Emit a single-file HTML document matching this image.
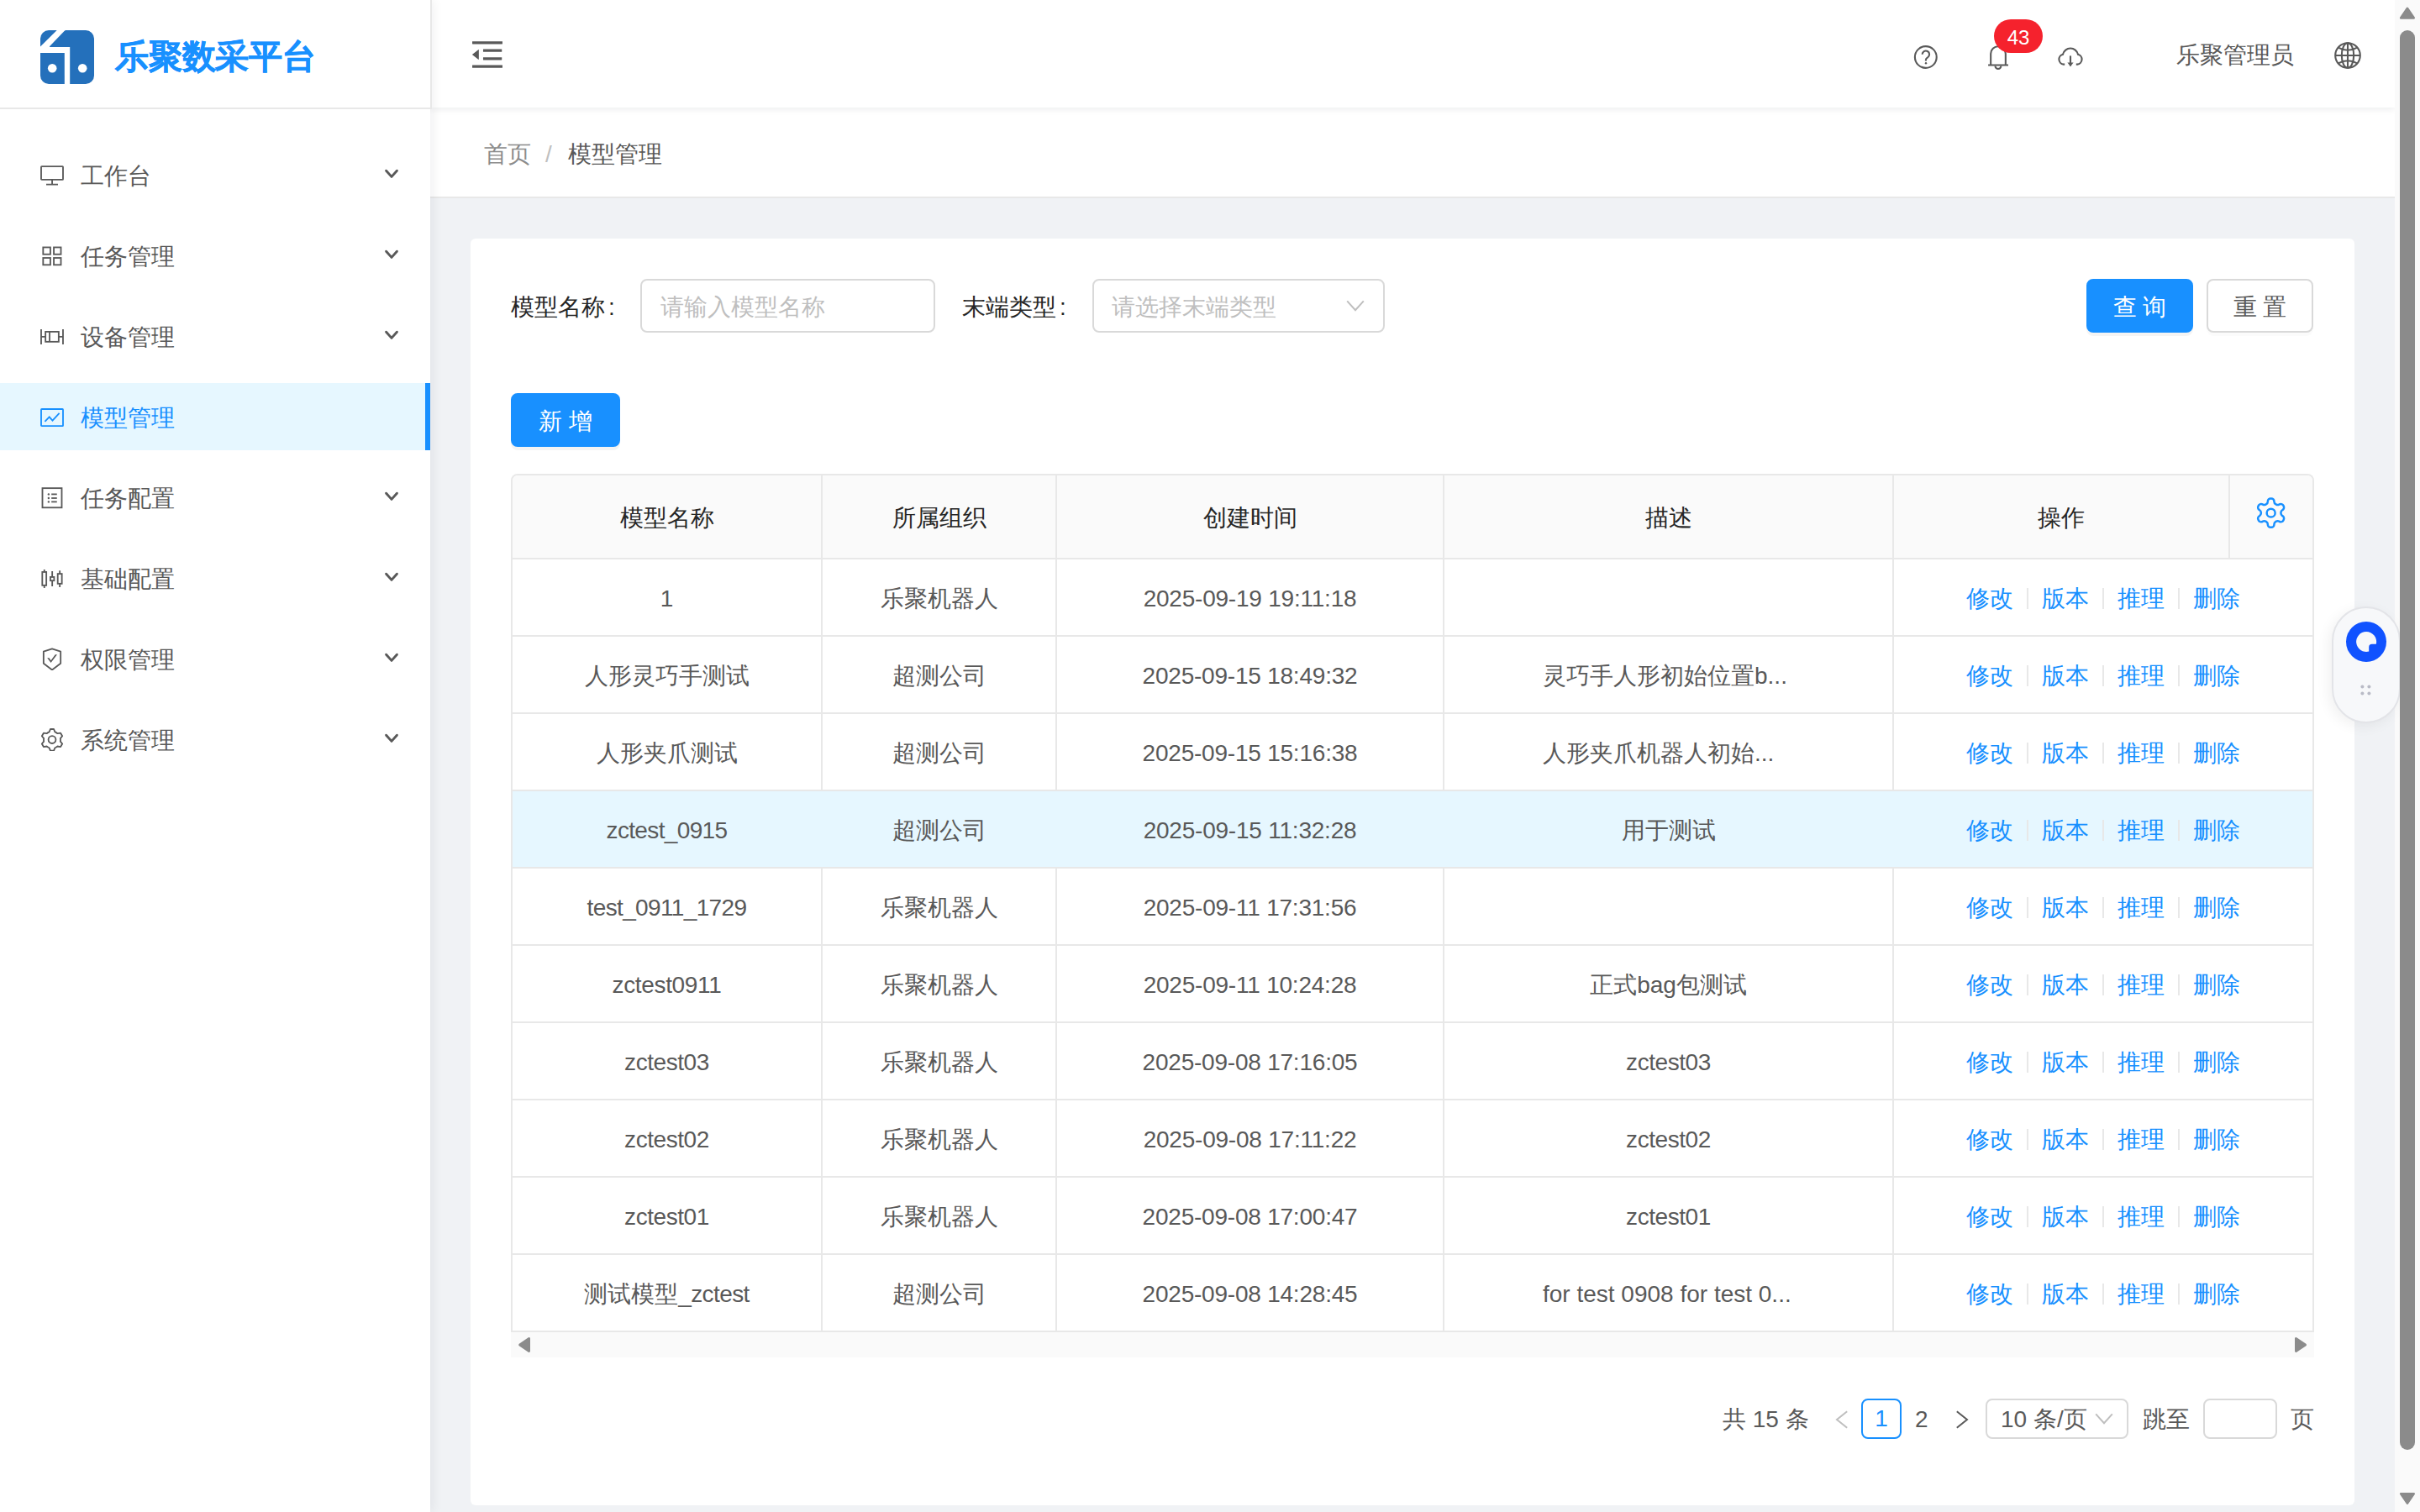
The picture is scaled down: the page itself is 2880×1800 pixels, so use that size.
<!DOCTYPE html>
<html><head><meta charset="utf-8"><title>模型管理</title>
<style>
html{zoom:2;overflow:hidden}
@media (max-width:1600px){html{zoom:1}}
*{box-sizing:border-box;margin:0;padding:0}
body{width:1440px;height:900px;overflow:hidden;position:relative;background:#f0f2f5;font-family:"Liberation Sans",sans-serif;font-size:14px;color:#595959;line-height:1.5715}
.abs{position:absolute}
/* sidebar */
#side{position:absolute;left:0;top:0;width:256px;height:900px;background:#fff;box-shadow:2px 0 6px rgba(0,21,41,.06);z-index:3}
#logo{position:absolute;left:0;top:0;width:257px;height:65px;border-bottom:1px solid #e8e8e8;border-right:1px solid #e8e8e8;background:#fff}
#logo svg{position:absolute;left:24px;top:18px}
#logo .t{position:absolute;left:68.5px;top:18.5px;font-size:20px;font-weight:bold;-webkit-text-stroke:0.25px #1890ff;color:#1890ff;line-height:30px;letter-spacing:-0.1px}
.mi{position:absolute;left:0;width:256px;height:40px;line-height:40px;color:#595959}
.mi .ic{position:absolute;left:24px;top:13px;width:14px;height:14px}
.mi .ic svg{display:block}
.mi .mt{position:absolute;left:48px;top:1px}
.mi.act{background:#e6f7ff;color:#1890ff}
.mi.act:after{content:"";position:absolute;right:0;top:0;width:3px;height:40px;background:#1890ff}
.arr{position:absolute;left:228px;top:15px;width:10px;height:8px}
/* header */
#hdr{position:absolute;left:256px;top:0;width:1169px;height:64px;background:#fff;box-shadow:0 1px 4px rgba(0,21,41,.08);z-index:2}
#bc{position:absolute;left:256px;top:64px;width:1169px;height:54px;background:#fff;border-bottom:1px solid #e8e8e8;z-index:1}
/* card */
#card{position:absolute;left:280px;top:142px;width:1121px;height:754px;background:#fff;border-radius:3px}
.lbl{position:absolute;color:#262626;line-height:24px}
.inp{position:absolute;height:32px;border:1px solid #d9d9d9;border-radius:4px;background:#fff}
.ph{position:absolute;color:#bfbfbf;line-height:24px}
.btn{position:absolute;height:32px;border-radius:4px;text-align:center;line-height:32px;font-size:14px}
.btn.p{background:#1890ff;color:#fff;border:1px solid #1890ff;box-shadow:0 2px 0 rgba(0,0,0,.045)}
.btn.d{background:#fff;color:#595959;border:1px solid #d9d9d9;box-shadow:0 2px 0 rgba(0,0,0,.016)}
/* table */
#tbl{position:absolute;left:304px;top:282px;width:1073px;height:511px;border:1px solid #e8e8e8;border-bottom:0;border-radius:4px 4px 0 0;overflow:hidden;background:#fff}
.th{position:absolute;top:0;height:50px;background:#fafafa;border-bottom:1px solid #e8e8e8}
.thc{position:absolute;top:0;height:50px;line-height:51px;text-align:center;color:#262626;font-weight:500}
.vl{position:absolute;width:1px;background:#e8e8e8}
.tr{position:absolute;left:0;width:1071px;height:46px;border-bottom:1px solid #e8e8e8}
.tr.hl{background:#e6f7ff}
.td{position:absolute;top:0;height:45px;line-height:47px;text-align:center;white-space:nowrap;color:#595959}
.c1{left:0;width:183.5px}.c2{left:184.5px;width:138.5px}.c3{left:324px;width:229.5px}.c4{left:554.5px;width:266.5px}.c5{left:822px;width:249px}
.c5 a{color:#1890ff}
.dv{display:inline-block;width:1px;height:12.6px;background:#e8e8e8;margin:0 8px;vertical-align:-1.5px}
#hs{position:absolute;left:304px;top:793px;width:1073px;height:15px;background:#fafafa}
/* pagination */
.pg{position:absolute;line-height:24px;color:#595959}
/* scrollbar */
#vs{position:absolute;left:1425px;top:0;width:15px;height:900px;background:#fafafa;z-index:4}
#th2{position:absolute;left:1428px;top:18px;width:9px;height:845px;border-radius:4.5px;background:#8b8b8b;z-index:6}
</style></head>
<body>
<div id="side">
  <div id="logo">
    <svg width="32" height="32" viewBox="0 0 64 64"><g fill="#2470bb"><path d="M0 19.6L19.7 0H10A10 10 0 0 0 0 10z"/><path d="M30.5 0H54A10 10 0 0 1 64 10V54A10 10 0 0 1 54 64H35.2V20H11.6Q10.4 19.8 11.2 18.9L28.5 1Q29.5 0 30.5 0z"/><path d="M0 27H28.8V64H10A10 10 0 0 1 0 54z"/></g><g fill="#fff"><circle cx="14.2" cy="45.2" r="5.3"/><circle cx="50.2" cy="45.2" r="5.3"/></g></svg>
    <div class="t">乐聚数采平台</div>
  </div>
<div class="mi" style="top:84px"><span class="ic"><svg width="14" height="14" viewBox="0 0 14 14"><rect x="0.5" y="2.07" width="13" height="7.86" rx="0.35" fill="none" stroke="#595959" stroke-width="0.92"/><path d="M7.03 9.9v2.88M3.5 12.78h7" stroke="#595959" stroke-width="0.92" fill="none"/></svg></span><span class="mt">工作台</span><svg class="arr" width="10" height="8" viewBox="0 0 10 8"><path d="M1.8 2.6L5 6.2 8.2 2.6" fill="none" stroke="#595959" stroke-width="1.45" stroke-linecap="round" stroke-linejoin="round"/></svg></div>
<div class="mi" style="top:132px"><span class="ic"><svg width="14" height="14" viewBox="0 0 14 14"><g fill="none" stroke="#595959" stroke-width="0.92"><rect x="1.66" y="2.23" width="4.3" height="4.14"/><rect x="8.03" y="2.23" width="4.22" height="4.14"/><rect x="1.66" y="8.51" width="4.3" height="4.14"/><rect x="8.03" y="8.51" width="4.22" height="4.14"/></g></svg></span><span class="mt">任务管理</span><svg class="arr" width="10" height="8" viewBox="0 0 10 8"><path d="M1.8 2.6L5 6.2 8.2 2.6" fill="none" stroke="#595959" stroke-width="1.45" stroke-linecap="round" stroke-linejoin="round"/></svg></div>
<div class="mi" style="top:180px"><span class="ic"><svg width="14" height="14" viewBox="0 0 14 14"><g fill="none" stroke="#595959" stroke-width="0.92"><path d="M0.5 3.02v8.93M13.49 3.02v8.93M0.5 7.4h2.57M10.92 7.4h2.57"/><rect x="3.07" y="4.46" width="7.85" height="5.96"/><path d="M5.5 4.46v5.96"/></g></svg></span><span class="mt">设备管理</span><svg class="arr" width="10" height="8" viewBox="0 0 10 8"><path d="M1.8 2.6L5 6.2 8.2 2.6" fill="none" stroke="#595959" stroke-width="1.45" stroke-linecap="round" stroke-linejoin="round"/></svg></div>
<div class="mi act" style="top:228px"><span class="ic"><svg width="14" height="14" viewBox="0 0 14 14"><g fill="none" stroke="#1890ff" stroke-width="0.92"><rect x="0.5" y="2.48" width="13" height="10.09" rx="0.35"/><path d="M2.7 9.9L5.35 7.2 7.25 9.3 11.3 4.9"/></g></svg></span><span class="mt">模型管理</span></div>
<div class="mi" style="top:276px"><span class="ic"><svg width="14" height="14" viewBox="0 0 14 14"><g fill="none" stroke="#595959" stroke-width="0.92"><rect x="1.25" y="1.57" width="11.49" height="11.57"/></g><g fill="#595959"><circle cx="4.93" cy="5.2" r="0.6"/><circle cx="4.93" cy="7.5" r="0.6"/><circle cx="4.93" cy="9.7" r="0.6"/><rect x="6.58" y="4.75" width="3.3" height="0.9"/><rect x="6.58" y="7.05" width="3.3" height="0.9"/><rect x="6.58" y="9.25" width="3.3" height="0.9"/></g></svg></span><span class="mt">任务配置</span><svg class="arr" width="10" height="8" viewBox="0 0 10 8"><path d="M1.8 2.6L5 6.2 8.2 2.6" fill="none" stroke="#595959" stroke-width="1.45" stroke-linecap="round" stroke-linejoin="round"/></svg></div>
<div class="mi" style="top:324px"><span class="ic"><svg width="14" height="14" viewBox="0 0 14 14"><g fill="none" stroke="#595959" stroke-width="0.92"><rect x="1.16" y="3.48" width="2.41" height="7.94"/><path d="M2.37 1.95v1.53M2.37 11.42v1.53"/><rect x="5.96" y="6.46" width="2.24" height="2.14"/><path d="M7.08 3.03v3.43M7.08 8.6v3.35"/><rect x="10.35" y="4.56" width="2.47" height="5.86"/><path d="M11.58 2.61v1.95M11.58 10.42v2.03"/></g></svg></span><span class="mt">基础配置</span><svg class="arr" width="10" height="8" viewBox="0 0 10 8"><path d="M1.8 2.6L5 6.2 8.2 2.6" fill="none" stroke="#595959" stroke-width="1.45" stroke-linecap="round" stroke-linejoin="round"/></svg></div>
<div class="mi" style="top:372px"><span class="ic"><svg width="14" height="14" viewBox="0 0 14 14"><g fill="none" stroke="#595959" stroke-width="0.92" stroke-linejoin="round"><path d="M7 1.15L12.08 2.85V9.9L7 13.75 1.92 9.9V2.85z"/></g><path d="M4.1 6.57h1.15l1.05 1.6 2.55-3.58h1.15L6.28 9.45z" fill="#595959"/></svg></span><span class="mt">权限管理</span><svg class="arr" width="10" height="8" viewBox="0 0 10 8"><path d="M1.8 2.6L5 6.2 8.2 2.6" fill="none" stroke="#595959" stroke-width="1.45" stroke-linecap="round" stroke-linejoin="round"/></svg></div>
<div class="mi" style="top:420px"><span class="ic"><svg width="14" height="14" viewBox="0 0 14 14"><g fill="none" stroke="#595959" stroke-width="0.92" stroke-linejoin="round"><path d="M5.29 2.73L5.98 1.01L8.02 1.01L8.71 2.73A5.00 5.00 0 0 1 10.21 3.60L12.05 3.34L13.07 5.10L11.92 6.56A5.00 5.00 0 0 1 11.92 8.30L13.07 9.76L12.05 11.52L10.21 11.26A5.00 5.00 0 0 1 8.71 12.13L8.02 13.85L5.98 13.85L5.29 12.13A5.00 5.00 0 0 1 3.79 11.26L1.95 11.52L0.93 9.76L2.08 8.30A5.00 5.00 0 0 1 2.08 6.56L0.93 5.10L1.95 3.34L3.79 3.60A5.00 5.00 0 0 1 5.29 2.73Z"/><circle cx="7" cy="7.3" r="2.2"/></g></svg></span><span class="mt">系统管理</span><svg class="arr" width="10" height="8" viewBox="0 0 10 8"><path d="M1.8 2.6L5 6.2 8.2 2.6" fill="none" stroke="#595959" stroke-width="1.45" stroke-linecap="round" stroke-linejoin="round"/></svg></div>
</div>
<div id="hdr">
  <svg class="abs" style="left:22.5px;top:21px" width="23" height="23" viewBox="0 0 1024 1024" fill="#595959"><path d="M408 442h480c4.4 0 8-3.6 8-8v-56c0-4.4-3.6-8-8-8H408c-4.4 0-8 3.6-8 8v56c0 4.4 3.6 8 8 8zm-8 204c0 4.4 3.6 8 8 8h480c4.4 0 8-3.6 8-8v-56c0-4.4-3.6-8-8-8H408c-4.4 0-8 3.6-8 8v56zm504-486H120c-4.4 0-8 3.6-8 8v56c0 4.4 3.6 8 8 8h784c4.4 0 8-3.6 8-8v-56c0-4.4-3.6-8-8-8zm0 632H120c-4.4 0-8 3.6-8 8v56c0 4.4 3.6 8 8 8h784c4.4 0 8-3.6 8-8v-56c0-4.4-3.6-8-8-8zM115.4 518.9L271.7 642c5.8 4.6 14.4.5 14.4-6.9V388.9c0-7.4-8.5-11.5-14.4-6.9L115.4 505.1a8.74 8.74 0 000 13.8z"/></svg>
  <!-- question -->
  <svg class="abs" style="left:882.5px;top:26.5px" width="15" height="15" viewBox="0 0 15 15"><circle cx="7.4" cy="7.5" r="6.45" fill="none" stroke="#595959" stroke-width="1.05"/><path d="M5.35 5.9a2.1 2.1 0 1 1 3.2 1.75c-.7.4-1.1.8-1.1 1.6v.5" fill="none" stroke="#595959" stroke-width="1.05"/><circle cx="7.5" cy="11.1" r="0.6" fill="#595959"/></svg>
  <!-- bell -->
  <svg class="abs" style="left:925px;top:26px" width="16" height="16" viewBox="0 0 16 16"><path d="M3.58 12.75V6.05a4.42 4.42 0 0 1 8.84 0V12.75M2.05 12.75h11.95" fill="none" stroke="#595959" stroke-width="1.05"/><path d="M6.25 13.3a1.72 1.72 0 0 0 3.44 0" fill="none" stroke="#595959" stroke-width="1.05"/></svg>
  <div class="abs" style="left:930.5px;top:11.5px;width:29px;height:20px;border-radius:10px;background:#f5222d;color:#fff;font-size:12px;line-height:22px;text-align:center">43</div>
  <!-- cloud -->
  <svg class="abs" style="left:968px;top:27px" width="16" height="14" viewBox="0 0 16 14"><path d="M4.6 11.3H3.9A3 3 0 0 1 3.5 5.4a4.6 4.6 0 0 1 9 0A3 3 0 0 1 12.1 11.3h-.7" fill="none" stroke="#595959" stroke-width="1.05"/><path d="M8 6.2v6" stroke="#595959" stroke-width="1.05"/><path d="M6.2 10.3L8 12.6 9.8 10.3z" fill="#595959"/></svg>
  <div class="abs" style="left:1039px;top:22px;line-height:22px;color:#595959">乐聚管理员</div>
  <!-- globe -->
  <svg class="abs" style="left:1133px;top:25px" width="16" height="16" viewBox="0 0 16 16"><g fill="none" stroke="#595959" stroke-width="1.05"><circle cx="8" cy="8" r="7.4"/><ellipse cx="8" cy="8" rx="3.6" ry="7.4"/><path d="M8 .6v14.8M.6 8h14.8M2.4 3.3Q8 6.5 13.6 3.3M2.4 12.7Q8 9.5 13.6 12.7"/></g></svg>
</div>
<div id="bc">
  <div class="abs" style="left:32px;top:17px;line-height:22px;font-size:14px"><span style="color:#8c8c8c">首页</span><span style="color:#bfbfbf;margin:0 9.5px 0 8.5px">/</span><span style="color:#595959">模型管理</span></div>
</div>
<div id="card"></div>
<div class="lbl" style="left:304px;top:171px">模型名称<span style="margin-left:2px">:</span></div>
<div class="inp" style="left:381px;top:166px;width:175.5px"></div>
<div class="ph" style="left:393px;top:171px">请输入模型名称</div>
<div class="lbl" style="left:572.5px;top:171px">末端类型<span style="margin-left:2px">:</span></div>
<div class="inp" style="left:650px;top:166px;width:174px"></div>
<div class="ph" style="left:661.5px;top:171px">请选择末端类型</div>
<svg class="abs" style="left:801px;top:178px" width="11" height="8" viewBox="0 0 11 8"><path d="M.6 1.2L5.5 6.6 10.4 1.2" fill="none" stroke="#bfbfbf" stroke-width="1"/></svg>
<div class="btn p" style="left:1241.5px;top:166px;width:63.5px">查 询</div>
<div class="btn d" style="left:1313px;top:166px;width:63.5px">重 置</div>
<div class="btn p" style="left:304px;top:234px;width:65px">新 增</div>

<div id="tbl">
  <div class="th" style="left:0;width:1071px"></div>
  <div class="thc c1">模型名称</div><div class="thc c2">所属组织</div><div class="thc c3">创建时间</div><div class="thc c4">描述</div><div class="thc" style="left:822px;width:199px">操作</div>
  <svg class="abs" style="left:1036.2px;top:11.8px" width="20.64" height="20.64" viewBox="0 0 24 24"><g fill="none" stroke="#1890ff" stroke-width="1.45" stroke-linecap="round" stroke-linejoin="round"><path d="M12.22 2h-.44a2 2 0 0 0-2 2v.18a2 2 0 0 1-1 1.73l-.43.25a2 2 0 0 1-2 0l-.15-.08a2 2 0 0 0-2.73.73l-.22.38a2 2 0 0 0 .73 2.73l.15.1a2 2 0 0 1 1 1.72v.51a2 2 0 0 1-1 1.74l-.15.09a2 2 0 0 0-.73 2.73l.22.38a2 2 0 0 0 2.73.73l.15-.08a2 2 0 0 1 2 0l.43.25a2 2 0 0 1 1 1.73V20a2 2 0 0 0 2 2h.44a2 2 0 0 0 2-2v-.18a2 2 0 0 1 1-1.73l.43-.25a2 2 0 0 1 2 0l.15.08a2 2 0 0 0 2.73-.73l.22-.39a2 2 0 0 0-.73-2.73l-.15-.08a2 2 0 0 1-1-1.74v-.5a2 2 0 0 1 1-1.74l.15-.09a2 2 0 0 0 .73-2.73l-.22-.38a2 2 0 0 0-2.73-.73l-.15.08a2 2 0 0 1-2 0l-.43-.25a2 2 0 0 1-1-1.73V4a2 2 0 0 0-2-2z"/><circle cx="12" cy="12" r="2.9"/></g></svg>
  <div class="vl" style="left:183.5px;top:0;height:510px"></div>
  <div class="vl" style="left:323px;top:0;height:510px"></div>
  <div class="vl" style="left:553.5px;top:0;height:510px"></div>
  <div class="vl" style="left:821px;top:0;height:510px"></div>
  <div class="vl" style="left:1021px;top:0;height:50px"></div>
<div class="tr" style="top:50px"><div class="td c1">1</div><div class="td c2">乐聚机器人</div><div class="td c3"><span style="letter-spacing:-0.11px">2025-09-19 19:11:18</span></div><div class="td c4"></div><div class="td c5"><a>修改</a><i class="dv"></i><a>版本</a><i class="dv"></i><a>推理</a><i class="dv"></i><a>删除</a></div></div>
<div class="tr" style="top:96px"><div class="td c1">人形灵巧手测试</div><div class="td c2">超测公司</div><div class="td c3"><span style="letter-spacing:-0.11px">2025-09-15 18:49:32</span></div><div class="td" style="left:613px;width:200px;text-align:left">灵巧手人形初始位置b...</div><div class="td c5"><a>修改</a><i class="dv"></i><a>版本</a><i class="dv"></i><a>推理</a><i class="dv"></i><a>删除</a></div></div>
<div class="tr" style="top:142px"><div class="td c1">人形夹爪测试</div><div class="td c2">超测公司</div><div class="td c3"><span style="letter-spacing:-0.11px">2025-09-15 15:16:38</span></div><div class="td" style="left:613px;width:200px;text-align:left">人形夹爪机器人初始...</div><div class="td c5"><a>修改</a><i class="dv"></i><a>版本</a><i class="dv"></i><a>推理</a><i class="dv"></i><a>删除</a></div></div>
<div class="tr hl" style="top:188px"><div class="td c1"><span style="letter-spacing:-0.32px">zctest_0915</span></div><div class="td c2">超测公司</div><div class="td c3"><span style="letter-spacing:-0.11px">2025-09-15 11:32:28</span></div><div class="td c4">用于测试</div><div class="td c5"><a>修改</a><i class="dv"></i><a>版本</a><i class="dv"></i><a>推理</a><i class="dv"></i><a>删除</a></div></div>
<div class="tr" style="top:234px"><div class="td c1"><span style="letter-spacing:-0.32px">test_0911_1729</span></div><div class="td c2">乐聚机器人</div><div class="td c3"><span style="letter-spacing:-0.11px">2025-09-11 17:31:56</span></div><div class="td c4"></div><div class="td c5"><a>修改</a><i class="dv"></i><a>版本</a><i class="dv"></i><a>推理</a><i class="dv"></i><a>删除</a></div></div>
<div class="tr" style="top:280px"><div class="td c1"><span style="letter-spacing:-0.165px">zctest0911</span></div><div class="td c2">乐聚机器人</div><div class="td c3"><span style="letter-spacing:-0.11px">2025-09-11 10:24:28</span></div><div class="td c4">正式bag包测试</div><div class="td c5"><a>修改</a><i class="dv"></i><a>版本</a><i class="dv"></i><a>推理</a><i class="dv"></i><a>删除</a></div></div>
<div class="tr" style="top:326px"><div class="td c1"><span style="letter-spacing:-0.22px">zctest03</span></div><div class="td c2">乐聚机器人</div><div class="td c3"><span style="letter-spacing:-0.11px">2025-09-08 17:16:05</span></div><div class="td c4"><span style="letter-spacing:-0.22px">zctest03</span></div><div class="td c5"><a>修改</a><i class="dv"></i><a>版本</a><i class="dv"></i><a>推理</a><i class="dv"></i><a>删除</a></div></div>
<div class="tr" style="top:372px"><div class="td c1"><span style="letter-spacing:-0.22px">zctest02</span></div><div class="td c2">乐聚机器人</div><div class="td c3"><span style="letter-spacing:-0.11px">2025-09-08 17:11:22</span></div><div class="td c4"><span style="letter-spacing:-0.22px">zctest02</span></div><div class="td c5"><a>修改</a><i class="dv"></i><a>版本</a><i class="dv"></i><a>推理</a><i class="dv"></i><a>删除</a></div></div>
<div class="tr" style="top:418px"><div class="td c1"><span style="letter-spacing:-0.22px">zctest01</span></div><div class="td c2">乐聚机器人</div><div class="td c3"><span style="letter-spacing:-0.11px">2025-09-08 17:00:47</span></div><div class="td c4"><span style="letter-spacing:-0.22px">zctest01</span></div><div class="td c5"><a>修改</a><i class="dv"></i><a>版本</a><i class="dv"></i><a>推理</a><i class="dv"></i><a>删除</a></div></div>
<div class="tr" style="top:464px"><div class="td c1">测试模型<span style="letter-spacing:-0.3px">_zctest</span></div><div class="td c2">超测公司</div><div class="td c3"><span style="letter-spacing:-0.11px">2025-09-08 14:28:45</span></div><div class="td" style="left:613px;width:200px;text-align:left">for test 0908 for test 0...</div><div class="td c5"><a>修改</a><i class="dv"></i><a>版本</a><i class="dv"></i><a>推理</a><i class="dv"></i><a>删除</a></div></div>
</div>
<div id="hs"></div>
<svg class="abs" style="left:307px;top:794px" width="10" height="13" viewBox="0 0 10 13"><path d="M2.3 6.5L7.8 2.7V10.3z" fill="#8b8b8b" stroke="#8b8b8b" stroke-width="1.4" stroke-linejoin="round"/></svg>
<svg class="abs" style="left:1364px;top:794px" width="10" height="13" viewBox="0 0 10 13"><path d="M7.8 6.5L2.2 2.7V10.3z" fill="#8b8b8b" stroke="#8b8b8b" stroke-width="1.4" stroke-linejoin="round"/></svg>

<div class="pg" style="left:1025px;top:833px">共 15 条</div>
<svg class="abs" style="left:1091.5px;top:839.5px" width="9" height="11" viewBox="0 0 9 11"><path d="M7.6 .6L1.5 5.5 7.6 10.4" fill="none" stroke="#bfbfbf" stroke-width="1"/></svg>
<div class="abs" style="left:1107.5px;top:832.5px;width:24px;height:24px;border:1px solid #1890ff;border-radius:4px;color:#1890ff;text-align:center;line-height:22px">1</div>
<div class="pg" style="left:1139.5px;top:833px">2</div>
<svg class="abs" style="left:1163px;top:839.5px" width="9" height="11" viewBox="0 0 9 11"><path d="M1.4 .6L7.5 5.5 1.4 10.4" fill="none" stroke="#595959" stroke-width="1"/></svg>
<div class="abs" style="left:1181.5px;top:832.5px;width:85px;height:24px;border:1px solid #d9d9d9;border-radius:4px"></div>
<div class="pg" style="left:1190.5px;top:833px">10 条/页</div>
<svg class="abs" style="left:1246.5px;top:840.5px" width="11" height="8" viewBox="0 0 11 8"><path d="M.6 1.2L5.5 6.6 10.4 1.2" fill="none" stroke="#bfbfbf" stroke-width="1"/></svg>
<div class="pg" style="left:1275px;top:833px">跳至</div>
<div class="abs" style="left:1311px;top:832.5px;width:44px;height:24px;border:1px solid #d9d9d9;border-radius:4px"></div>
<div class="pg" style="left:1363px;top:833px">页</div>

<!-- floating widget -->
<div class="abs" style="left:1387.5px;top:361px;width:41px;height:69.5px;border-radius:20.5px;background:#f7f8fa;border:1px solid #e3e4e8;box-shadow:-2px 2px 8px rgba(0,0,0,.06);z-index:5"></div>
<svg class="abs" style="left:1396px;top:370px;z-index:5" width="24" height="24" viewBox="0 0 24 24"><circle cx="12" cy="12" r="12" fill="#1052ff"/><path d="M12 6a6 6 0 1 0 1.6 11.8V15.2a1.8 1.8 0 0 1 1.8-1.8h2.5A6 6 0 0 0 12 6z" fill="#f7f8fa"/></svg>
<svg class="abs" style="left:1404.5px;top:407.5px;z-index:5" width="7" height="7" viewBox="0 0 7 7"><g fill="#b9bbc6"><circle cx="1.2" cy="1.2" r="1"/><circle cx="5.2" cy="1.2" r="1"/><circle cx="1.2" cy="5.2" r="1"/><circle cx="5.2" cy="5.2" r="1"/></g></svg>

<div id="vs"></div>
<svg class="abs" style="left:1427px;top:3px;z-index:6" width="11" height="10" viewBox="0 0 11 10"><path d="M5.47 2.05L9.3 7.7H1.65z" fill="#8b8b8b" stroke="#8b8b8b" stroke-width="1.4" stroke-linejoin="round"/></svg>
<svg class="abs" style="left:1427px;top:887px;z-index:6" width="11" height="10" viewBox="0 0 11 10"><path d="M5.47 7.75L9.3 2.15H1.65z" fill="#8b8b8b" stroke="#8b8b8b" stroke-width="1.4" stroke-linejoin="round"/></svg>
<div id="th2"></div>
</body></html>
